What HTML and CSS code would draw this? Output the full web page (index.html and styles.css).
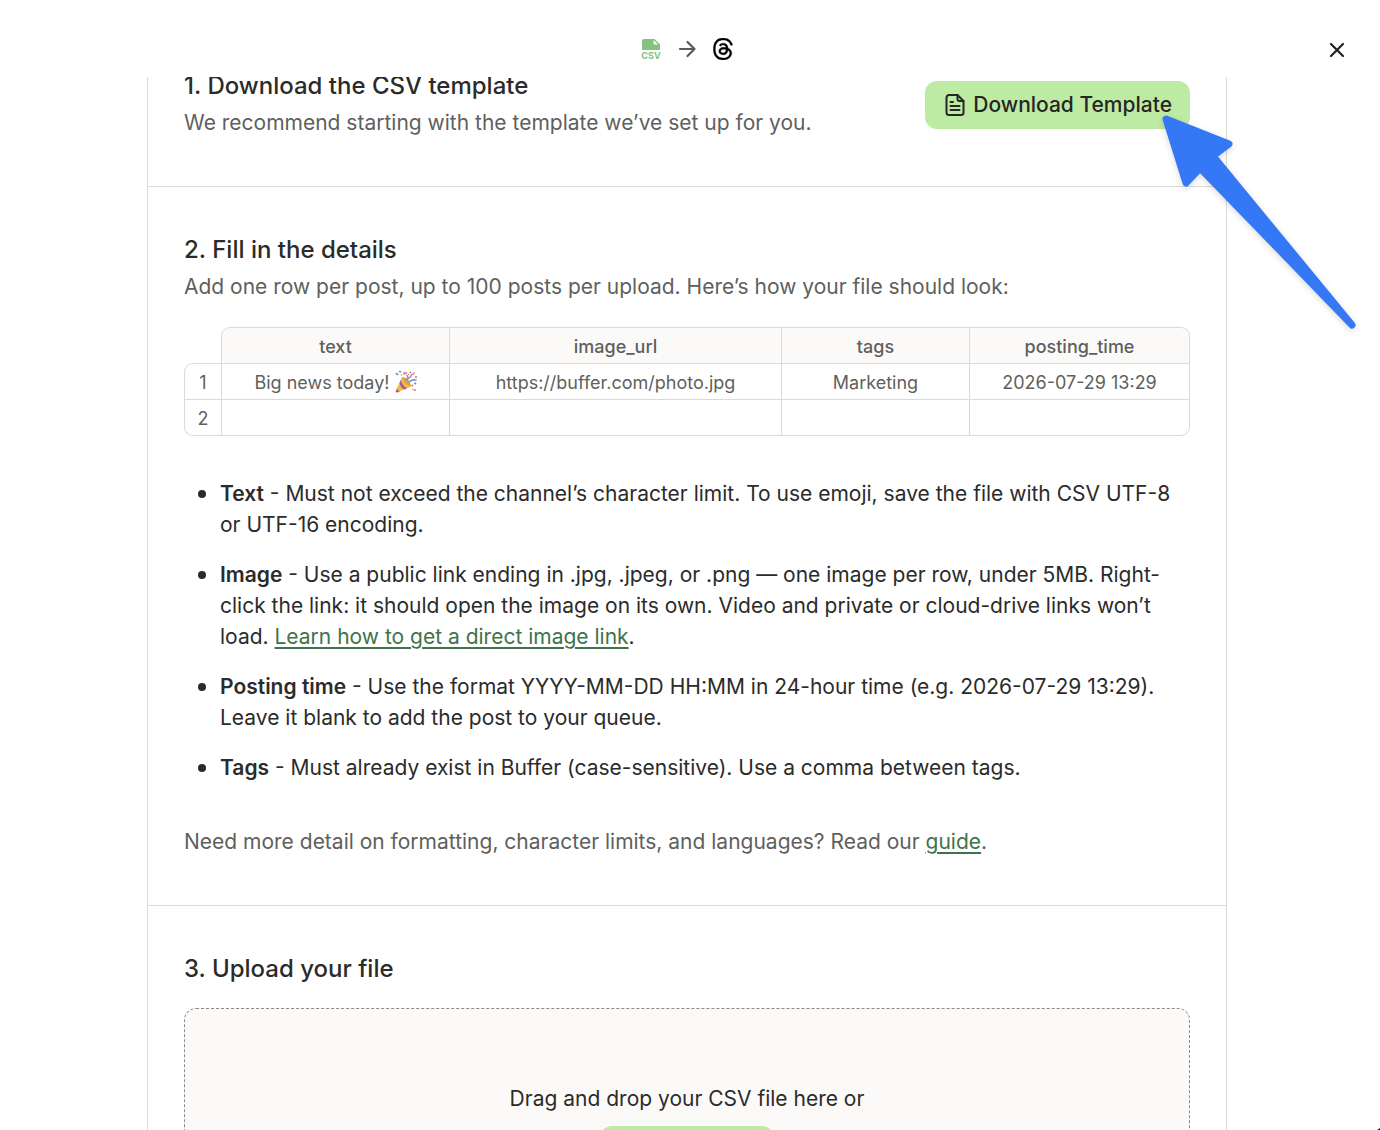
FILE: index.html
```html
<!DOCTYPE html>
<html lang="en">
<head>
    <meta charset="UTF-8">
    <meta name="viewport" content="width=device-width, initial-scale=1.0">
    <title>Bulk Upload</title>
    <link rel="stylesheet" href="styles.css">
</head>
<body>
    <header class="topbar">
        <div class="route">
            <svg width="20" height="22" viewBox="0 0 20 22" aria-label="CSV">
                <path d="M3 1h9v4a2 2 0 0 0 2 2h5v5H1V3a2 2 0 0 1 2-2z" fill="#86c17f"/>
                <path d="M11 1h2.500L19 6.500V8h-5a3 3 0 0 1-3-3z" fill="#86c17f"/>
                <path d="M12.500 2v3.500a1 1 0 0 0 1 1H17z" fill="#fff"/>
                <text class="csv-label" x="10" y="21" text-anchor="middle">CSV</text>
            </svg>
            <svg width="20" height="20" viewBox="0 0 20 20" fill="none" stroke="#5a5a58" stroke-width="2.200" stroke-linecap="round" stroke-linejoin="round">
                <path d="M3 10h14M10.500 3l7 7-7 7"/>
            </svg>
            <svg width="20" height="22" viewBox="1.100 0 21.800 24" fill="#000" stroke="#000" stroke-width="0.400" aria-label="Threads">
                <path d="M12.186 24h-.007c-3.581-.024-6.334-1.205-8.184-3.509C2.35 18.44 1.5 15.586 1.472 12.01v-.017c.03-3.579.879-6.43 2.525-8.482C5.845 1.205 8.6.024 12.18 0h.014c2.746.02 5.043.725 6.826 2.098 1.677 1.29 2.858 3.13 3.509 5.467l-2.04.569c-1.104-3.96-3.898-5.984-8.304-6.015-2.91.022-5.11.936-6.54 2.717C4.307 6.504 3.616 8.914 3.589 12c.027 3.086.718 5.496 2.057 7.164 1.43 1.783 3.631 2.698 6.54 2.717 2.623-.02 4.358-.631 5.8-2.045 1.647-1.613 1.618-3.593 1.09-4.798-.31-.71-.873-1.3-1.634-1.75-.192 1.352-.622 2.446-1.284 3.272-.886 1.102-2.14 1.704-3.73 1.79-1.202.065-2.361-.218-3.259-.801-1.063-.689-1.685-1.74-1.752-2.964-.065-1.19.408-2.285 1.33-3.082.88-.76 2.119-1.207 3.583-1.291a13.853 13.853 0 0 1 3.02.142c-.126-.742-.375-1.332-.75-1.757-.513-.586-1.308-.883-2.359-.89h-.029c-.844 0-1.992.232-2.721 1.32L7.734 7.847c.98-1.454 2.568-2.256 4.478-2.256h.044c3.194.02 5.097 1.975 5.287 5.388.108.046.216.094.321.142 1.49.7 2.58 1.761 3.154 3.07.797 1.82.871 4.79-1.548 7.158-1.85 1.81-4.094 2.628-7.277 2.65Zm1.003-11.69c-.242 0-.487.007-.739.021-1.836.103-2.98.946-2.916 2.143.067 1.256 1.452 1.839 2.784 1.767 1.224-.065 2.818-.543 3.086-3.71a10.5 10.5 0 0 0-2.215-.221z"/>
            </svg>
        </div>
        <button class="close" aria-label="Close">
            <svg width="18" height="18" viewBox="0 0 18 18" fill="none" stroke="#222" stroke-width="2.200" stroke-linecap="round">
                <path d="M3 3l12 12M15 3L3 15"/>
            </svg>
        </button>
    </header>

    <main class="panel">
        <section class="step step-row">
            <div>
                <h2>1. Download the CSV template</h2>
                <p>We recommend starting with the template we’ve set up for you.</p>
            </div>
            <button class="btn">
                <svg width="20" height="24" viewBox="0 0 20 24" fill="none" stroke="#262626" stroke-width="2" stroke-linecap="round" stroke-linejoin="round">
                    <path d="M12.500 2H4a2.500 2.500 0 0 0-2.500 2.500v15A2.500 2.500 0 0 0 4 22h12a2.500 2.500 0 0 0 2.500-2.500V8z"/>
                    <path d="M12.500 2v4a2 2 0 0 0 2 2h4M5.500 9h2.500M5.500 13h9M5.500 17h9"/>
                </svg>
                Download Template
            </button>
        </section>

        <section class="step">
            <h2>2. Fill in the details</h2>
            <p>Add one row per post, up to 100 posts per upload. Here’s how your file should look:</p>

            <table class="sheet">
                <colgroup>
                    <col class="col-num">
                    <col class="col-text">
                    <col>
                    <col class="col-tags">
                    <col class="col-time">
                </colgroup>
                <thead>
                    <tr>
                        <td></td>
                        <th>text</th>
                        <th>image_url</th>
                        <th>tags</th>
                        <th>posting_time</th>
                    </tr>
                </thead>
                <tbody>
                    <tr>
                        <td>1</td>
                        <td>Big news today!
                            <svg class="emoji" width="22" height="22" viewBox="0 0 22 22" aria-label="Party popper">
                                <path d="M7 6c5 1 9 5 9 9.500L2 21.500c-1 .4-1.700-.4-1.300-1.300z" fill="#f0bd3c"/>
                                <path d="M4.500 12c1 3 2.500 5.500 5 6.500l2.500-1c-3-1.500-5.500-5-6.300-8.500zM2 17.500c.5 1.500 1.500 2.500 2.800 3l-2.500 1-1.500-.7z" fill="#9a53bd"/>
                                <ellipse cx="11.500" cy="10.500" rx="2" ry="5.500" transform="rotate(-43 11.500 10.500)" fill="#dba336"/>
                                <path d="M11 9c2-1.500 2.500-3 1-4.500M14 11c2-2 4-2.500 7-2" fill="none" stroke="#6f9be8" stroke-width="1.600" stroke-linecap="round"/>
                                <path d="M12.500 9c1-3 3-2 3.500-4s2-1 3-3" fill="none" stroke="#e0708b" stroke-width="1.400" stroke-linecap="round"/>
                                <path d="M1 2l2 2M4 0l2 1M15 1l1 1M19.500 12l1.500 1" stroke="#5b83dc" stroke-width="1.600"/>
                                <path d="M8.500 1.500l1.500 2M11 1v2M20 6h2M16.500 14l1.500 1M19 19h2" stroke="#e0708b" stroke-width="1.600"/>
                                <path d="M6 3.500l1 1M17.500 18l1 1M13 3l1 1" stroke="#edaa38" stroke-width="1.600"/>
                            </svg>
                        </td>
                        <td>https://buffer.com/photo.jpg</td>
                        <td>Marketing</td>
                        <td>2026-07-29 13:29</td>
                    </tr>
                    <tr>
                        <td>2</td>
                        <td></td>
                        <td></td>
                        <td></td>
                        <td></td>
                    </tr>
                </tbody>
            </table>

            <ul class="rules">
                <li><strong>Text</strong> - Must not exceed the channel’s character limit. To use emoji, save the file with CSV UTF-8 or UTF-16 encoding.</li>
                <li><strong>Image</strong> - Use a public link ending in .jpg, .jpeg, or .png — one image per row, under 5MB. Right-click the link: it should open the image on its own. Video and private or cloud-drive links won’t load. <a href="#">Learn how to get a direct image link</a>.</li>
                <li><strong>Posting time</strong> - Use the format YYYY-MM-DD HH:MM in 24-hour time (e.g. 2026-07-29 13:29). Leave it blank to add the post to your queue.</li>
                <li><strong>Tags</strong> - Must already exist in Buffer (case-sensitive). Use a comma between tags.</li>
            </ul>

            <p>Need more detail on formatting, character limits, and languages? Read our <a href="#">guide</a>.</p>
        </section>

        <section class="step">
            <h2>3. Upload your file</h2>
            <div class="dropzone">
                <span>Drag and drop your CSV file here or</span>
                <button class="btn btn-choose">Choose File</button>
            </div>
        </section>
    </main>

    <!-- pointer over the download button -->
    <svg class="pointer" width="208" height="228" viewBox="0 0 208 228">
        <path d="M10 12L73 37L57 49L196 218L44 61L30 76Z" fill="#3478f6" stroke="#3478f6" stroke-width="7" stroke-linejoin="round"/>
    </svg>
    <svg class="corner" width="3" height="2" viewBox="0 0 3 2"><path d="M3 0v2H0z" fill="#222"/></svg>
</body>
</html>
```
FILE: styles.css
```css
* {
    box-sizing: border-box;
}
body {
    margin: 0;
    height: 100vh;
    overflow: hidden;
    position: relative;
    background-color: #fff;
    color: #2b2b2a;
    font-family: Inter, "Liberation Sans", sans-serif;
    font-size: 21px;
    line-height: 31px;
}
h2, p, ul {
    margin: 0;
}
h2 {
    margin-bottom: 6px;
    font-size: 24px;
    font-weight: 500;
    line-height: 30px;
}
p {
    color: #5f5f5d;
}
a {
    color: #40734a;
    text-decoration: underline;
    text-decoration-thickness: 2px;
    text-underline-offset: 3px;
}
button {
    border: none;
    font-family: inherit;
    cursor: pointer;
}

.topbar {
    position: relative;
    z-index: 1;
    display: grid;
    grid-template-columns: 1fr auto 1fr;
    align-items: center;
    height: 77px;
    padding: 22px 34px 0 28px;
    background-color: #fff;
}
.route {
    grid-column: 2;
    display: flex;
    align-items: center;
    gap: 16px;
    padding-bottom: 2px;
}
.csv-label {
    font-size: 9px;
    font-weight: 700;
    fill: #86c17f;
}
.close {
    justify-self: end;
    display: flex;
    padding: 0;
    background: none;
}

.panel {
    max-width: 1080px;
    margin: -6px auto 0;
    border: 1px solid #dadad9;
    border-width: 0 1px;
    position: relative;
    right: 3px;
}
.step {
    padding: 48px 36px;
    border-bottom: 1px solid #dadad9;
}
.step-row {
    display: flex;
    align-items: center;
    justify-content: space-between;
    padding-top: 0;
}
.btn {
    display: flex;
    align-items: center;
    gap: 8px;
    height: 48px;
    padding: 0 18px 0 20px;
    border-radius: 12px;
    background-color: #beeba3;
    color: #262626;
    font-size: 21px;
    font-weight: 500;
}

.sheet {
    width: 100%;
    margin: 25px 0 42px;
    table-layout: fixed;
    border-collapse: separate;
    border-spacing: 0;
    color: #5f5f5d;
    font-size: 18px;
    line-height: 33px;
    text-align: center;
}
.col-num { width: 37px; }
.col-text { width: 228px; }
.col-tags { width: 188px; }
.col-time { width: 221px; }
.sheet th, .sheet td {
    height: 36px;
    padding: 2px 0 0;
    border-top: 1px solid #dadad9;
    border-left: 1px solid #dadad9;
    font-weight: 400;
}
.sheet th {
    background-color: #fbfaf8;
    font-weight: 500;
}
.sheet thead td {
    border: none;
}
.sheet tr > :last-child {
    border-right: 1px solid #dadad9;
}
.sheet tbody tr:last-child td {
    height: 37px;
    border-bottom: 1px solid #dadad9;
}
.sheet th:nth-child(2) {
    border-top-left-radius: 9px;
}
.sheet th:last-child {
    border-top-right-radius: 9px;
}
.sheet tbody tr:first-child td:first-child {
    border-top-left-radius: 9px;
}
.sheet tbody tr:last-child td:first-child {
    border-bottom-left-radius: 9px;
}
.sheet tbody tr:last-child td:last-child {
    border-bottom-right-radius: 9px;
}
.emoji {
    vertical-align: -4px;
}

.rules {
    display: flex;
    flex-direction: column;
    gap: 19px;
    margin-bottom: 43px;
    padding-left: 36px;
    list-style: none;
}
.rules li {
    position: relative;
}
.rules li::before {
    content: "";
    position: absolute;
    top: 12px;
    left: -22px;
    width: 8px;
    height: 8px;
    border-radius: 50%;
    background-color: #2b2b2a;
}
.rules strong {
    font-weight: 600;
}

.dropzone {
    display: flex;
    flex-direction: column;
    align-items: center;
    gap: 12px;
    margin-top: 24px;
    padding: 74px 24px;
    border: 1px dashed #8b8b88;
    border-radius: 12px;
    background-color: #fbfaf8;
}
.btn-choose {
    padding: 0 28px;
}

.pointer {
    position: absolute;
    top: 107px;
    right: 16px;
    filter: drop-shadow(0 2px 3px rgba(0, 0, 0, 0.15));
}
.corner {
    position: absolute;
    right: 0;
    bottom: 0;
}
```
